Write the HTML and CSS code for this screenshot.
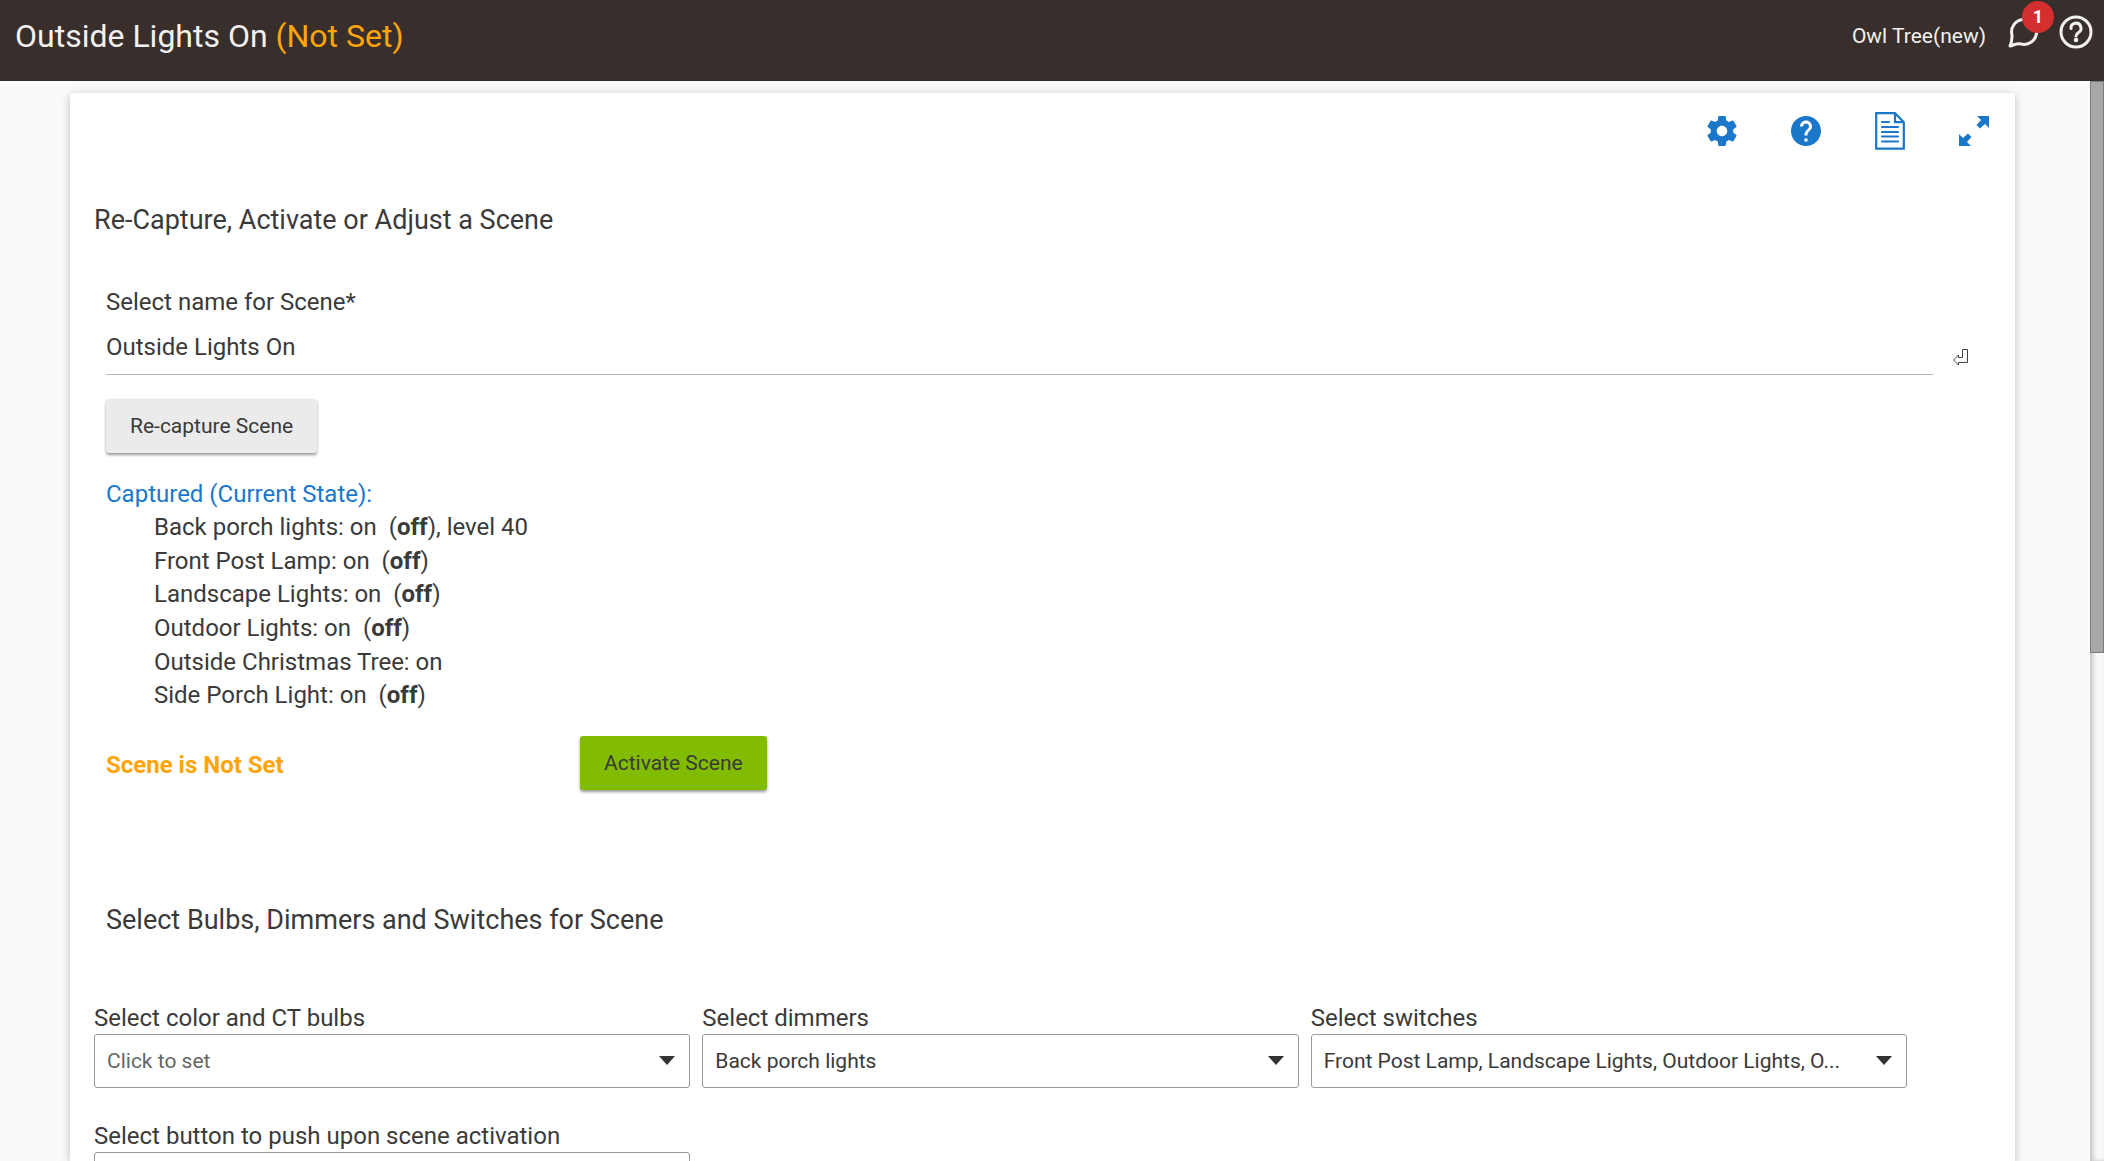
FILE: index.html
```
<!DOCTYPE html>
<html lang="en">

<head>
    <meta charset="UTF-8">
    <meta name="viewport" content="width=device-width, initial-scale=1.0">
    <title>Outside Lights On</title>
    <link rel="stylesheet" href="styles.css">
</head>

<body>
    <header class="topbar">
        <h1 class="title">Outside Lights On <span class="notset">(Not Set)</span></h1>
        <div class="hub">
            <a class="hub-name" href="#">Owl Tree(new)</a>
            <button class="icon-btn chat" type="button" aria-label="Messages">
                <svg width="32" height="32" viewBox="0 0 32 32" fill="none" stroke="#f3f1f0" stroke-width="3" stroke-linejoin="round">
                    <path d="M2 30c2-4 2-7 2-11a12.500 12.500 0 1 1 9 9c-4-1-7 1-11 2z" />
                </svg>
                <span class="badge">1</span>
            </button>
            <button class="icon-btn" type="button" aria-label="Help">
                <svg width="34" height="34" viewBox="0 0 34 34" fill="none" stroke="#f3f1f0" stroke-width="3">
                    <circle cx="17" cy="17" r="15" />
                    <path d="M12 13.500a5 5 0 1 1 7.500 4c-1.800 1.200-2.500 2-2.500 3.500" stroke-linecap="round" />
                    <circle cx="17" cy="25" r="2.300" fill="#f3f1f0" stroke="none" />
                </svg>
            </button>
        </div>
    </header>

    <div class="page">
        <main class="card">
            <nav class="tools">
                <button class="icon-btn" type="button" aria-label="Settings">
                    <svg width="30" height="30" viewBox="2 2 20 20" fill="#1a77c9">
                        <path d="M19.430 12.980c.04-.32.07-.64.07-.98s-.03-.66-.07-.98l2.110-1.650c.19-.15.24-.42.12-.64l-2-3.460c-.12-.22-.39-.3-.61-.22l-2.490 1c-.52-.4-1.080-.73-1.690-.98l-.38-2.650C14.460 2.180 14.250 2 14 2h-4c-.25 0-.46.18-.49.42l-.38 2.650c-.61.25-1.170.59-1.690.98l-2.490-1c-.23-.09-.49 0-.61.22l-2 3.460c-.13.22-.07.49.12.64l2.110 1.650c-.04.32-.07.65-.07.98s.03.66.07.98l-2.110 1.650c-.19.15-.24.42-.12.64l2 3.460c.12.22.39.3.61.22l2.490-1c.52.4 1.080.73 1.690.98l.38 2.650c.03.24.24.42.49.42h4c.25 0 .46-.18.49-.42l.38-2.650c.61-.25 1.170-.59 1.690-.98l2.490 1c.23.09.49 0 .61-.22l2-3.460c.12-.22.07-.49-.12-.64l-2.110-1.650zM12 15.500c-1.930 0-3.500-1.570-3.500-3.500s1.570-3.500 3.500-3.500 3.500 1.570 3.500 3.500-1.570 3.500-3.500 3.500z" />
                    </svg>
                </button>
                <button class="icon-btn" type="button" aria-label="App help">
                    <svg width="30" height="30" viewBox="2 2 20 20" fill="#1a77c9">
                        <path d="M12 2C6.480 2 2 6.480 2 12s4.480 10 10 10 10-4.480 10-10S17.520 2 12 2zm1 17h-2v-2h2v2zm2.070-7.750l-.9.92C13.450 12.900 13 13.500 13 15h-2v-.5c0-1.100.45-2.100 1.170-2.830l1.240-1.260c.37-.36.59-.86.59-1.410 0-1.100-.9-2-2-2s-2 .9-2 2H8c0-2.210 1.790-4 4-4s4 1.790 4 4c0 .88-.36 1.680-.93 2.250z" />
                    </svg>
                </button>
                <button class="icon-btn" type="button" aria-label="Logs">
                    <svg width="30" height="38" viewBox="0 0 30 38" fill="none" stroke="#1a77c9" stroke-width="2.200">
                        <path d="M1.200 1.200h18.800l8.800 9v26.500H1.200zM20 1.200v9h8.800" />
                        <path d="M7 10h7M7 15h16M7 20h16M7 24.500h16M7 29.500h16" stroke-linecap="round" />
                    </svg>
                </button>
                <button class="icon-btn" type="button" aria-label="Full screen">
                    <svg width="30" height="30" viewBox="0 0 30 30" fill="#1a77c9">
                        <path d="M18 0h12v12l-4-4-5 4.500-3.500-3.500 4.500-5zM12 30H0V18l4 4 5-4.500 3.500 3.500-4.500 5z" />
                    </svg>
                </button>
            </nav>

            <h2 class="heading">Re-Capture, Activate or Adjust a Scene</h2>

            <form class="scene">
                <label class="label" for="scene-name">Select name for Scene*</label>
                <div class="name-row">
                    <input class="name" id="scene-name" type="text" value="Outside Lights On">
                    <svg class="enter" width="16" height="17" viewBox="0 0 16 17" fill="none" stroke="#444">
                        <path d="M9.500 0.500h5v13h-9v2.500l-5-5 5-5v2.500h4z" />
                    </svg>
                </div>
                <button class="btn" type="button">Re-capture Scene</button>

                <div class="captured">
                    <span class="captured-title">Captured (Current State):</span>
                    <ul class="devices">
                        <li>Back porch lights: on&nbsp; (<b>off</b>), level 40</li>
                        <li>Front Post Lamp: on&nbsp; (<b>off</b>)</li>
                        <li>Landscape Lights: on&nbsp; (<b>off</b>)</li>
                        <li>Outdoor Lights: on&nbsp; (<b>off</b>)</li>
                        <li>Outside Christmas Tree: on</li>
                        <li>Side Porch Light: on&nbsp; (<b>off</b>)</li>
                    </ul>
                </div>

                <div class="status-row">
                    <b class="status">Scene is Not Set</b>
                    <button class="btn green" type="button">Activate Scene</button>
                </div>
            </form>

            <h2 class="heading indent">Select Bulbs, Dimmers and Switches for Scene</h2>

            <form class="selects">
                <div class="field">
                    <label class="label" for="bulbs">Select color and CT bulbs</label>
                    <select class="select empty" id="bulbs">
                        <option>Click to set</option>
                    </select>
                </div>
                <div class="field">
                    <label class="label" for="dimmers">Select dimmers</label>
                    <select class="select" id="dimmers">
                        <option>Back porch lights</option>
                    </select>
                </div>
                <div class="field">
                    <label class="label" for="switches">Select switches</label>
                    <select class="select" id="switches">
                        <option>Front Post Lamp, Landscape Lights, Outdoor Lights, O...</option>
                    </select>
                </div>
                <div class="field">
                    <label class="label" for="push">Select button to push upon scene activation</label>
                    <select class="select empty" id="push">
                        <option>Click to set</option>
                    </select>
                </div>
            </form>
        </main>
        <div class="scrollbar">
            <div class="thumb"></div>
        </div>
    </div>
</body>

</html>
```
FILE: styles.css
```
* {
    box-sizing: border-box;
}

body {
    margin: 0;
    height: 100vh;
    display: flex;
    flex-direction: column;
    overflow: hidden;
    font-family: Roboto, "Liberation Sans", sans-serif;
    font-size: 24px;
    line-height: 1.4;
    color: #3a3a3a;
    background-color: #fafafa;
}

button,
input,
select {
    font-family: inherit;
    color: inherit;
}

/* top bar */
.topbar {
    flex: none;
    display: flex;
    justify-content: space-between;
    height: 81px;
    padding: 0 11px 0 15px;
    background-color: #382e2b;
    color: #f3f1f0;
}

.title {
    margin: 0;
    font-size: 32px;
    font-weight: 400;
    line-height: 72px;
}

.notset {
    color: #ffa50a;
}

.hub {
    display: flex;
    align-items: center;
    height: 64px;
}

.hub-name {
    margin-right: 22px;
    padding-top: 9px;
    font-size: 21px;
    color: inherit;
    text-decoration: none;
}

.icon-btn {
    display: block;
    padding: 0;
    border: 0;
    background: none;
    line-height: 0;
}

.chat {
    position: relative;
    margin-right: 19px;
}

.badge {
    position: absolute;
    top: -15px;
    left: 14px;
    width: 32px;
    height: 32px;
    border-radius: 50%;
    background-color: #d32f2f;
    color: #fff;
    font-size: 18px;
    font-weight: 700;
    line-height: 32px;
    text-align: center;
}

/* page */
.page {
    flex: 1;
    display: flex;
    min-height: 0;
}

.card {
    flex: 1;
    margin: 12px 75px 0 70px;
    padding: 19px 24px 24px;
    border-radius: 3px 3px 0 0;
    background-color: #fff;
    box-shadow: 0 2px 8px rgba(0, 0, 0, .25);
}

.tools {
    display: flex;
    align-items: center;
    justify-content: flex-end;
    gap: 54px;
    height: 38px;
    padding-right: 2px;
}

.heading {
    margin: 51px 0 0;
    font-size: 27px;
    font-weight: 400;
    line-height: 38px;
}

.heading.indent {
    margin: 111px 0 0 12px;
}

.scene {
    margin: 47px 22px 0 12px;
}

.label {
    display: block;
}

.name-row {
    display: flex;
    align-items: center;
    gap: 20px;
}

.name {
    flex: 1;
    height: 55px;
    padding: 0;
    border: 0;
    border-bottom: 1px solid #b5b5b5;
    background: none;
    font-size: 24px;
}

.enter {
    margin-top: 20px;
}

.btn {
    display: block;
    height: 54px;
    padding: 0 24px;
    border: 0;
    border-radius: 3px;
    background-color: #ebebeb;
    font-size: 21px;
    box-shadow: 0 2px 3px rgba(0, 0, 0, .4);
}

.name-row + .btn {
    margin-top: 24px;
}

.btn.green {
    background-color: #81bc00;
}

.captured {
    margin-top: 25px;
}

.captured-title {
    color: #1a77c9;
}

.devices {
    margin: 0;
    padding: 0 0 0 48px;
    list-style: none;
}

.status-row {
    display: grid;
    grid-template-columns: 474px auto;
    justify-content: start;
    align-items: center;
    margin-top: 23px;
}

.status {
    padding-top: 6px;
    color: #ffa50a;
}

.selects {
    display: grid;
    grid-template-columns: repeat(3, 1fr);
    gap: 32px 12px;
    margin: 63px 84px 0 0;
    line-height: 32px;
}

.select {
    display: block;
    width: 100%;
    height: 54px;
    padding: 0 60px 0 12px;
    border: 1px solid #999;
    border-radius: 3px;
    appearance: none;
    background: url("data:image/svg+xml,%3Csvg xmlns='http://www.w3.org/2000/svg' width='16' height='9'%3E%3Cpath d='M0 0h16l-8 9z' fill='%23333'/%3E%3C/svg%3E") no-repeat right 14px center;
    font-size: 21px;
}

.select.empty {
    color: #666;
}

/* scroll bar */
.scrollbar {
    flex: none;
    width: 14px;
    background-color: #f7f7f7;
    box-shadow: inset 3px 0 4px rgba(0, 0, 0, .2);
}

.thumb {
    height: 53%;
    border: 1px solid #777b84;
    background-color: #a8a8a8;
}
```
